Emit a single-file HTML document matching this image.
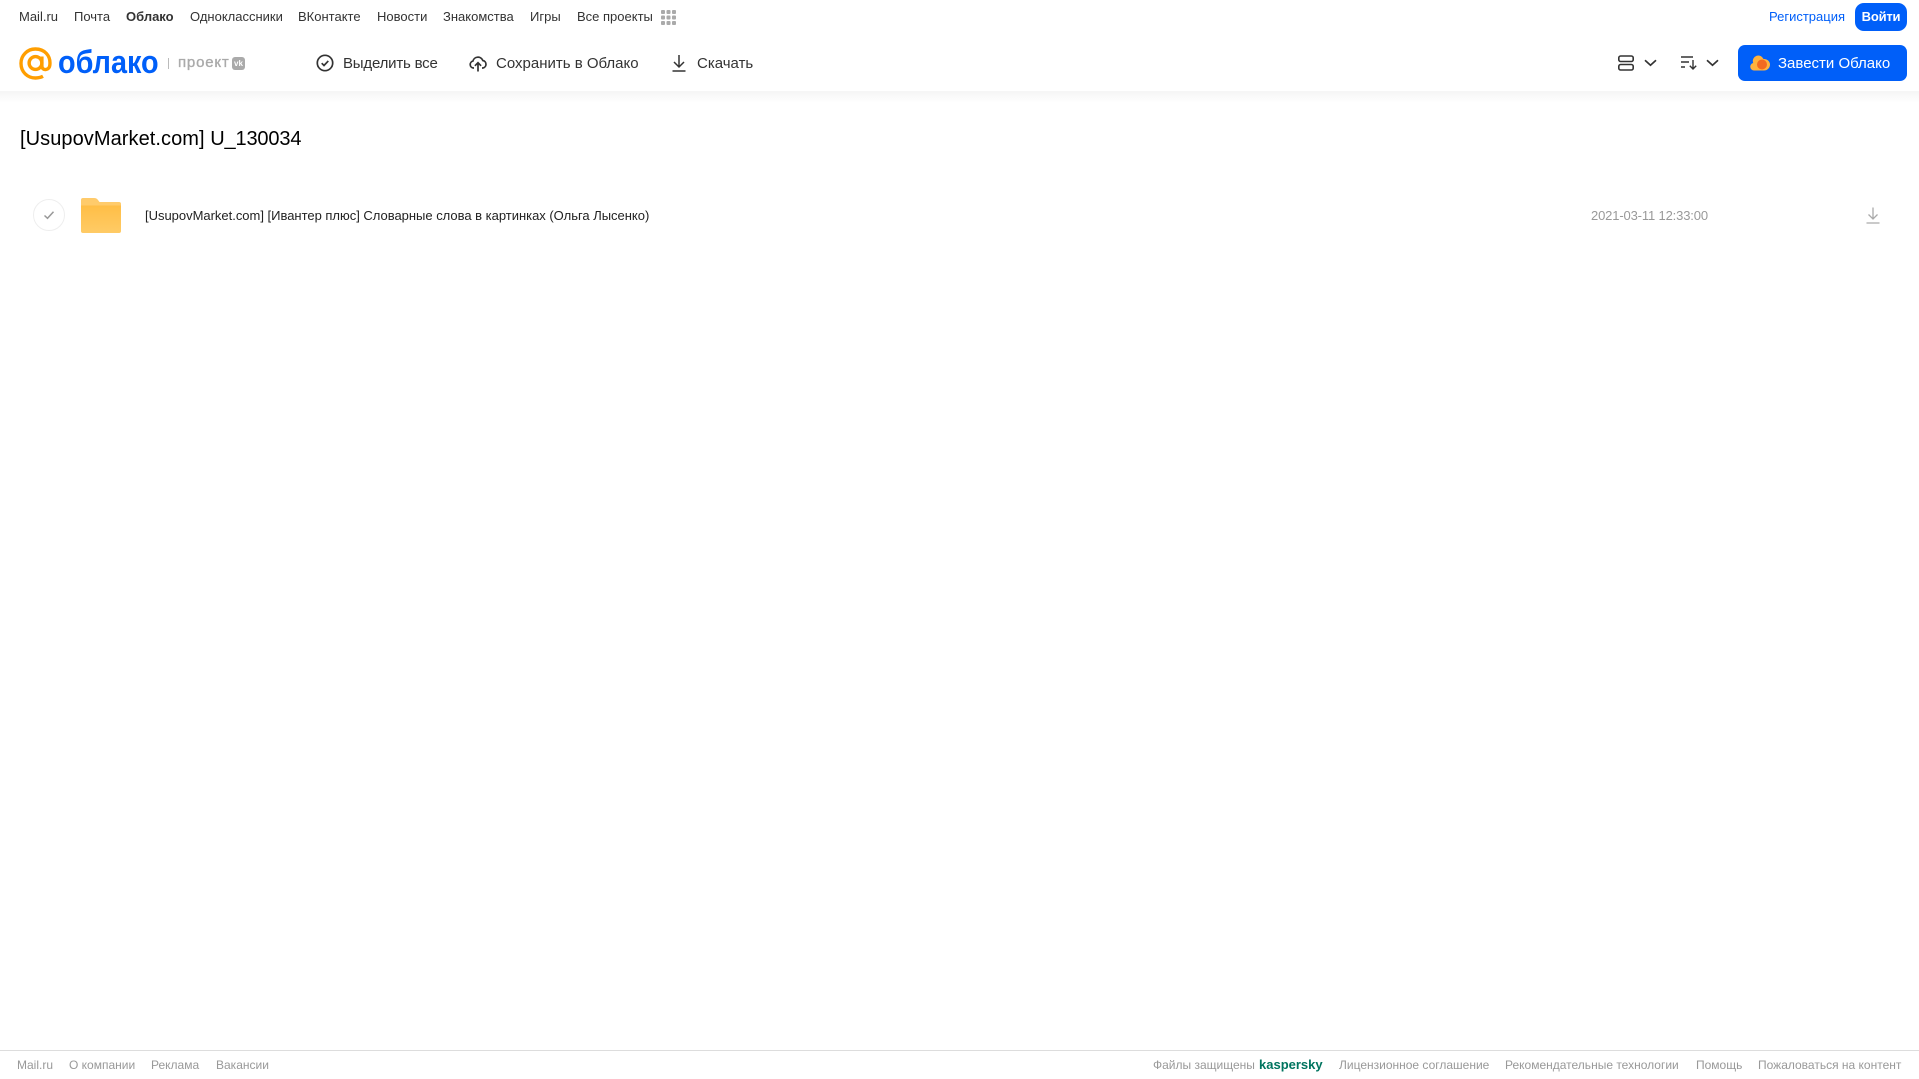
<!DOCTYPE html>
<html lang="ru"><head><meta charset="utf-8"><title>Облако</title>
<style>
html,body{margin:0;padding:0;width:1919px;height:1079px;overflow:hidden;background:#fff;font-family:"Liberation Sans",Arial,sans-serif}
.t{position:absolute;white-space:nowrap;line-height:16px}
.n{top:9px;font-size:13px;color:#333}
.b{top:56px;font-size:15px;color:#333}
.f{top:1057px;font-size:12px;color:#999}
svg{position:absolute;display:block}
#hdr{position:absolute;left:0;top:0;width:1919px;height:91px;background:#fff}
#shd{position:absolute;left:0;top:91px;width:1919px;height:12px;background:linear-gradient(#f5f5f5,#fff)}
</style></head><body>
<div id="hdr"></div><div id="shd"></div>
<div class="t n" style="left:19px">Mail.ru</div>
<div class="t n" style="left:74px">Почта</div>
<div class="t n" style="left:126px;font-weight:bold">Облако</div>
<div class="t n" style="left:190px">Одноклассники</div>
<div class="t n" style="left:298px">ВКонтакте</div>
<div class="t n" style="left:377px">Новости</div>
<div class="t n" style="left:443px">Знакомства</div>
<div class="t n" style="left:530px">Игры</div>
<div class="t n" style="left:577px">Все проекты</div>
<svg style="left:661px;top:10px" width="15" height="15" fill="#aaa"><rect width="4" height="4" rx="1"/><rect x="5.5" width="4" height="4" rx="1"/><rect x="11" width="4" height="4" rx="1"/><rect y="5.5" width="4" height="4" rx="1"/><rect x="5.5" y="5.5" width="4" height="4" rx="1"/><rect x="11" y="5.5" width="4" height="4" rx="1"/><rect y="11" width="4" height="4" rx="1"/><rect x="5.5" y="11" width="4" height="4" rx="1"/><rect x="11" y="11" width="4" height="4" rx="1"/></svg>
<div class="t n" style="left:1769px;color:#005ff9">Регистрация</div>
<div class="t" style="left:1855px;top:3px;width:52px;height:28px;line-height:28px;background:#005ff9;border-radius:9px;color:#fff;font-size:13px;font-weight:bold;text-align:center;letter-spacing:-.2px">Войти</div>

<svg style="left:19px;top:47px" width="33" height="33" viewBox="0 0 33 33" fill="none" stroke="#ff9e00" stroke-width="3.4"><circle cx="16.5" cy="16" r="6.4"/><path d="M22.9 9.5v9.5c0 5 7.6 5 8-1.500 .8-9-5.500-15.500-14.400-15.500A14.300 14.300 0 0 0 2 16.500c0 8.500 6.500 14.500 14.500 14.500 3 0 5.500-.6 7.500-1.700"/></svg>
<div class="t" style="left:58px;top:42px;font-size:32px;line-height:40px;font-weight:bold;color:#005ff9;transform:scaleX(.9);transform-origin:left">облако</div>
<div style="position:absolute;left:168px;top:58px;width:1px;height:11px;background:#bbb"></div>
<div class="t" style="left:178px;top:55px;font-size:15px;color:#aaa;letter-spacing:.8px;-webkit-text-stroke:.35px #aaa">проект</div>
<div class="t" style="left:232px;top:57px;width:13px;height:13px;border-radius:3px;background:#aaa;color:#fff;font-size:8px;line-height:13px;font-weight:bold;text-align:center">vk</div>

<svg style="left:316px;top:54px" width="18" height="18" viewBox="0 0 18 18" fill="none" stroke="#333" stroke-width="1.700"><circle cx="9" cy="9" r="7.700"/><path d="M5.700 9.200l2.300 2.300 4.300-4.600"/></svg>
<div class="t b" style="left:343px;letter-spacing:-.2px">Выделить все</div>
<svg style="left:469px;top:54px" width="18" height="18" viewBox="0 0 18 18" fill="none" stroke="#333" stroke-width="1.700"><path d="M5 14H4.500a3.500 3.500 0 0 1-.6-6.900A5.200 5.200 0 0 1 13.800 6.500a3.800 3.800 0 0 1 0 7.500H13"/><path d="M9 17.500V9M5.900 11.800L9 8.700l3.100 3.100"/></svg>
<div class="t b" style="left:496px">Сохранить в Облако</div>
<svg style="left:671px;top:54px" width="16" height="18" viewBox="0 0 16 18" fill="none" stroke="#333" stroke-width="1.500"><path d="M8 1v11.500M3 8l5 5 5-5M1.500 17h13"/></svg>
<div class="t b" style="left:697px">Скачать</div>

<svg style="left:1618px;top:55px" width="16" height="16" viewBox="0 0 16 16" fill="none" stroke="#333" stroke-width="1.600"><rect x=".8" y="1" width="14.400" height="5.500" rx="1.800"/><rect x=".8" y="9.500" width="14.400" height="5.500" rx="1.800"/></svg>
<svg style="left:1644px;top:59px" width="13" height="8" viewBox="0 0 13 8" fill="none" stroke="#333" stroke-width="1.700"><path d="M1 1.200l5.500 5 5.500-5"/></svg>
<svg style="left:1681px;top:56px" width="17" height="14" viewBox="0 0 17 14" fill="none" stroke="#333" stroke-width="1.400"><path d="M0 1h12M0 6h8M0 11h4M12 4v9M8.800 9.800L12 13l3.200-3.200"/></svg>
<svg style="left:1706px;top:59px" width="13" height="8" viewBox="0 0 13 8" fill="none" stroke="#333" stroke-width="1.700"><path d="M1 1.200l5.500 5 5.500-5"/></svg>
<div style="position:absolute;left:1738px;top:45px;width:169px;height:36px;background:#005ff9;border-radius:7px"></div>
<svg style="left:1750px;top:54px" width="20" height="17" viewBox="0 0 20 17"><path d="M4 16.500a3.800 3.800 0 0 1-.8-7.500A5.500 5.500 0 0 1 13.500 5 5.800 5.800 0 0 1 20 10.500a6 6 0 0 1-6 6z" fill="#ffb23e"/><circle cx="12" cy="10.500" r="5" fill="#f26a21"/></svg>
<div class="t" style="left:1778px;top:56px;font-size:15px;color:#fff">Завести Облако</div>

<div class="t" style="left:20px;top:127px;font-size:20px;line-height:24px;color:#000"><span style="letter-spacing:.07px">[UsupovMarket.com]</span> <span style="letter-spacing:-.15px">U_130034</span></div>

<div style="position:absolute;left:33px;top:199px;width:30px;height:30px;border:1px solid #eee;border-radius:50%"></div>
<svg style="left:43px;top:210px" width="12" height="10" viewBox="0 0 12 10" fill="none" stroke="#999" stroke-width="1.500"><path d="M1.500 5.500l3 2.800 6-6.500"/></svg>
<svg style="left:81px;top:198px" width="40" height="35" viewBox="0 0 40 35"><defs><linearGradient id="g" x1="0" y1="0" x2="0" y2="1"><stop offset="0" stop-color="#ffbe46"/><stop offset="1" stop-color="#ffcb66"/></linearGradient></defs><path d="M2 0h11c2 0 3 .8 4 2l1.500 2H38a2 2 0 0 1 2 2v3H0V2a2 2 0 0 1 2-2z" fill="#ffcb6b"/><path d="M0 7.500h40V33a2 2 0 0 1-2 2H2a2 2 0 0 1-2-2z" fill="url(#g)"/></svg>
<div class="t" style="left:145px;top:208px;font-size:13px;color:#222;letter-spacing:-.015px">[UsupovMarket.com] [Ивантер плюс] Словарные слова в картинках (Ольга Лысенко)</div>
<div class="t" style="left:1591px;top:208px;font-size:13px;color:#999;letter-spacing:-.15px">2021-03-11 12:33:00</div>
<svg style="left:1866px;top:207px" width="14" height="17" viewBox="0 0 14 17" fill="none" stroke="#aaa" stroke-width="1.300"><path d="M7 .5v11M2.500 7.500L7 12l4.500-4.500M.5 16h13"/></svg>

<div style="position:absolute;left:0;top:1050px;width:1919px;height:1px;background:#ddd"></div>
<div class="t f" style="left:17px">Mail.ru</div>
<div class="t f" style="left:69px">О компании</div>
<div class="t f" style="left:151px">Реклама</div>
<div class="t f" style="left:216px">Вакансии</div>
<div class="t f" style="left:1153px">Файлы защищены</div>
<div class="t f" style="left:1259px;font-size:13px;font-weight:bold;color:#00745f">kaspersky</div>
<div class="t f" style="left:1339px">Лицензионное соглашение</div>
<div class="t f" style="left:1505px">Рекомендательные технологии</div>
<div class="t f" style="left:1696px">Помощь</div>
<div class="t f" style="left:1758px">Пожаловаться на контент</div>
</body></html>
